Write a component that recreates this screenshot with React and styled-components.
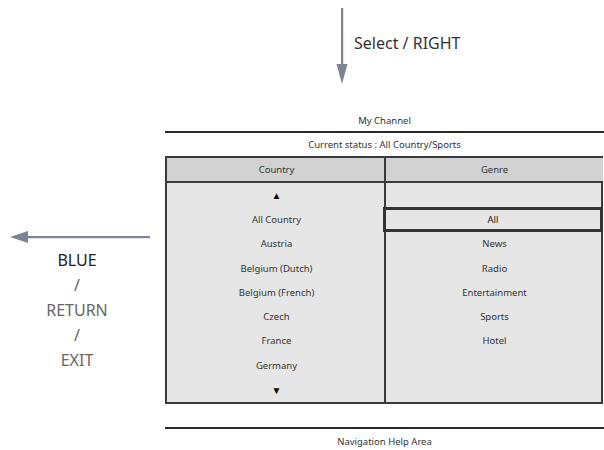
import React from 'react';
import styled, { createGlobalStyle } from 'styled-components';

const countries = ['▲', 'All Country', 'Austria', 'Belgium (Dutch)', 'Belgium (French)', 'Czech', 'France', 'Germany', '▼'];
const genres = ['', 'All', 'News', 'Radio', 'Entertainment', 'Sports', 'Hotel', '', ''];

const App = () => {
  return (
    <Page>
      <GlobalStyle />
      <TopHint>
        <svg width="14" height="78" viewBox="0 0 14 78">
          <rect x="6" y="0" width="2.2" height="60" fill="#7d8494" />
          <polygon points="1.5,56 12.5,56 7,76" fill="#7d8494" />
        </svg>
        <HintText>Select / RIGHT</HintText>
      </TopHint>
      <Main>
        <BackHint>
          <svg width="140" height="14" viewBox="0 0 140 14">
            <rect x="14" y="6" width="126" height="2.2" fill="#7d8494" />
            <polygon points="0,7 18,1 18,13" fill="#7d8494" />
          </svg>
          <KeyList>
            <Key dark>BLUE</Key>
            <Key>/</Key>
            <Key>RETURN</Key>
            <Key>/</Key>
            <Key>EXIT</Key>
          </KeyList>
        </BackHint>
        <Panel>
          <Caption>My Channel</Caption>
          <Rule />
          <Status>Current status : All Country/Sports</Status>
          <Table>
            <HeadCell>Country</HeadCell>
            <HeadCell right>Genre</HeadCell>
            <Column>
              {countries.map((c, i) => (
                <Row key={i} arrow={c === '▲' || c === '▼'}>{c}</Row>
              ))}
            </Column>
            <Column right>
              {genres.map((g, i) => (
                <Row key={i} selected={g === 'All'}>{g}</Row>
              ))}
            </Column>
          </Table>
          <FootRule />
          <Caption bottom>Navigation Help Area</Caption>
        </Panel>
      </Main>
    </Page>
  );
};

const GlobalStyle = createGlobalStyle`
  body {
    margin: 0;
    background: #ffffff;
    font-family: 'Noto Sans', 'Open Sans', sans-serif;
  }
`;

const Page = styled.div`
  width: 604px;
  height: 450px;
  overflow: hidden;
  background: #ffffff;
`;

const TopHint = styled.div`
  display: flex;
  align-items: flex-start;
  height: 104px;
  padding: 8px 0 0 335px;
  box-sizing: border-box;
  svg {
    display: block;
    flex: none;
  }
`;

const HintText = styled.div`
  margin: 25px 0 0 5px;
  font-size: 16px;
  color: #333;
  line-height: 20px;
`;

const Main = styled.div`
  display: flex;
  padding-top: 8px;
`;

const BackHint = styled.div`
  width: 165px;
  flex: none;
  display: flex;
  flex-direction: column;
  align-items: flex-start;
  padding: 118px 0 0 10px;
  box-sizing: border-box;
  svg {
    display: block;
  }
`;

const KeyList = styled.div`
  width: 134px;
  display: flex;
  flex-direction: column;
  align-items: center;
  margin-top: 4px;
`;

const Key = styled.div`
  font-size: 16px;
  line-height: 25px;
  color: ${(p) => (p.dark ? '#222' : '#666')};
`;

const Panel = styled.div`
  width: 439px;
  display: flex;
  flex-direction: column;
`;

const Caption = styled.div`
  text-align: center;
  font-size: 9.5px;
  color: #333;
  height: 19px;
  line-height: 17px;
  padding-top: ${(p) => (p.bottom ? '4px' : '0')};
`;

const Rule = styled.div`
  height: 2px;
  background: #2a2a2a;
`;

const FootRule = styled(Rule)`
  margin-top: 23px;
`;

const Status = styled.div`
  text-align: center;
  font-size: 9.5px;
  color: #333;
  height: 23px;
  line-height: 23px;
`;

const Table = styled.div`
  width: 438px;
  display: grid;
  grid-template-columns: 219px 217px;
  border: 2px solid #3a3a3a;
  box-sizing: border-box;
  background: #e6e6e6;
`;

const HeadCell = styled.div`
  height: 23px;
  line-height: 23px;
  text-align: center;
  font-size: 9.5px;
  color: #333;
  background: #d2d2d2;
  border-bottom: 2px solid #3a3a3a;
  border-left: ${(p) => (p.right ? '2px solid #3a3a3a' : 'none')};
  margin-left: ${(p) => (p.right ? '-2px' : '0')};
`;

const Column = styled.div`
  display: flex;
  flex-direction: column;
  border-left: ${(p) => (p.right ? '2px solid #3a3a3a' : 'none')};
  margin-left: ${(p) => (p.right ? '-2px' : '0')};
`;

const Row = styled.div`
  height: 24.3px;
  box-sizing: border-box;
  display: flex;
  align-items: center;
  justify-content: center;
  font-size: ${(p) => (p.arrow ? '10px' : '9.5px')};
  color: ${(p) => (p.arrow || p.selected ? '#111' : '#333')};
  border: ${(p) => (p.selected ? '3px solid #333' : 'none')};
  margin-left: ${(p) => (p.selected ? '-3px' : '0')};
`;

export default App;
